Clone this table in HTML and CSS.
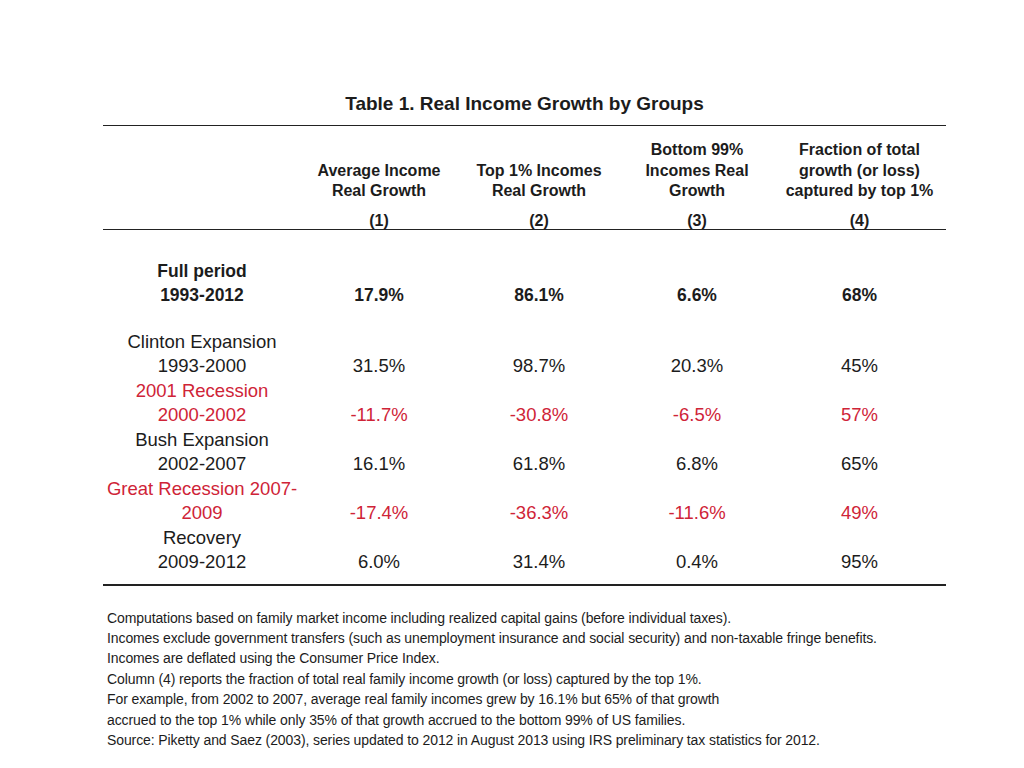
FILE: index.html
```html
<!DOCTYPE html>
<html>
<head>
<meta charset="utf-8">
<link rel="stylesheet" href="styles.css">
</head>
<body>
<div class="page">
  <h1 class="title">Table 1. Real Income Growth by Groups</h1>
  <div class="table">
    <div class="head">
      <div class="hcell"></div>
      <div class="hcell">Average Income<br>Real Growth</div>
      <div class="hcell">Top 1% Incomes<br>Real Growth</div>
      <div class="hcell">Bottom 99%<br>Incomes Real<br>Growth</div>
      <div class="hcell">Fraction of total<br>growth (or loss)<br>captured by top 1%</div>
      <div class="ncell"></div>
      <div class="ncell">(1)</div>
      <div class="ncell">(2)</div>
      <div class="ncell">(3)</div>
      <div class="ncell">(4)</div>
    </div>
    <div class="body">
      <div class="row full">
        <div class="label">Full period<br>1993-2012</div>
        <div class="val">17.9%</div>
        <div class="val">86.1%</div>
        <div class="val">6.6%</div>
        <div class="val">68%</div>
      </div>
      <div class="row first">
        <div class="label">Clinton Expansion<br>1993-2000</div>
        <div class="val">31.5%</div>
        <div class="val">98.7%</div>
        <div class="val">20.3%</div>
        <div class="val">45%</div>
      </div>
      <div class="row red">
        <div class="label">2001 Recession<br>2000-2002</div>
        <div class="val">-11.7%</div>
        <div class="val">-30.8%</div>
        <div class="val">-6.5%</div>
        <div class="val">57%</div>
      </div>
      <div class="row">
        <div class="label">Bush Expansion<br>2002-2007</div>
        <div class="val">16.1%</div>
        <div class="val">61.8%</div>
        <div class="val">6.8%</div>
        <div class="val">65%</div>
      </div>
      <div class="row red">
        <div class="label">Great Recession 2007-<br>2009</div>
        <div class="val">-17.4%</div>
        <div class="val">-36.3%</div>
        <div class="val">-11.6%</div>
        <div class="val">49%</div>
      </div>
      <div class="row">
        <div class="label">Recovery<br>2009-2012</div>
        <div class="val">6.0%</div>
        <div class="val">31.4%</div>
        <div class="val">0.4%</div>
        <div class="val">95%</div>
      </div>
    </div>
  </div>
  <div class="notes">
    <p>Computations based on family market income including realized capital gains (before individual taxes).</p>
    <p>Incomes exclude government transfers (such as unemployment insurance and social security) and non-taxable fringe benefits.</p>
    <p>Incomes are deflated using the Consumer Price Index.</p>
    <p>Column (4) reports the fraction of total real family income growth (or loss) captured by the top 1%.</p>
    <p>For example, from 2002 to 2007, average real family incomes grew by 16.1% but 65% of that growth</p>
    <p>accrued to the top 1% while only 35% of that growth accrued to the bottom 99% of US families.</p>
    <p>Source: Piketty and Saez (2003), series updated to 2012 in August 2013 using IRS preliminary tax statistics for 2012.</p>
  </div>
</div>
</body>
</html>
```
FILE: styles.css
```css
html, body {
  margin: 0;
  padding: 0;
  background: #ffffff;
}
body {
  font-family: "Liberation Sans", Arial, sans-serif;
  color: #1c1c1c;
}
.page {
  width: 843px;
  margin-left: 103px;
  padding-top: 92px;
}
.title {
  margin: 0;
  font-size: 19px;
  font-weight: bold;
  text-align: center;
  line-height: 24px;
  height: 33px;
  border-bottom: 1.5px solid #222;
}
.head {
  display: grid;
  grid-template-columns: 198px 156px 164px 152px 173px;
  padding-top: 14px;
  border-bottom: 1.5px solid #222;
  font-weight: bold;
  font-size: 16px;
}
.hcell {
  display: flex;
  align-items: flex-end;
  justify-content: center;
  text-align: center;
  line-height: 20.5px;
}
.ncell {
  text-align: center;
  line-height: 16px;
  padding-top: 11px;
}
.body {
  padding-top: 29px;
  padding-bottom: 9px;
  border-bottom: 2px solid #222;
  font-size: 18.5px;
}
.row {
  display: grid;
  grid-template-columns: 198px 156px 164px 152px 173px;
  line-height: 24.5px;
}
.row.full {
  font-weight: bold;
  font-size: 17.5px;
}
.row.first {
  margin-top: 22px;
}
.row.red {
  color: #cf2437;
}
.label {
  text-align: center;
  white-space: nowrap;
}
.val {
  display: flex;
  align-items: flex-end;
  justify-content: center;
}
.notes {
  padding-top: 22px;
  padding-left: 4px;
  font-size: 14px;
  letter-spacing: -0.1px;
}
.notes p {
  margin: 0;
  line-height: 20.4px;
}
```
